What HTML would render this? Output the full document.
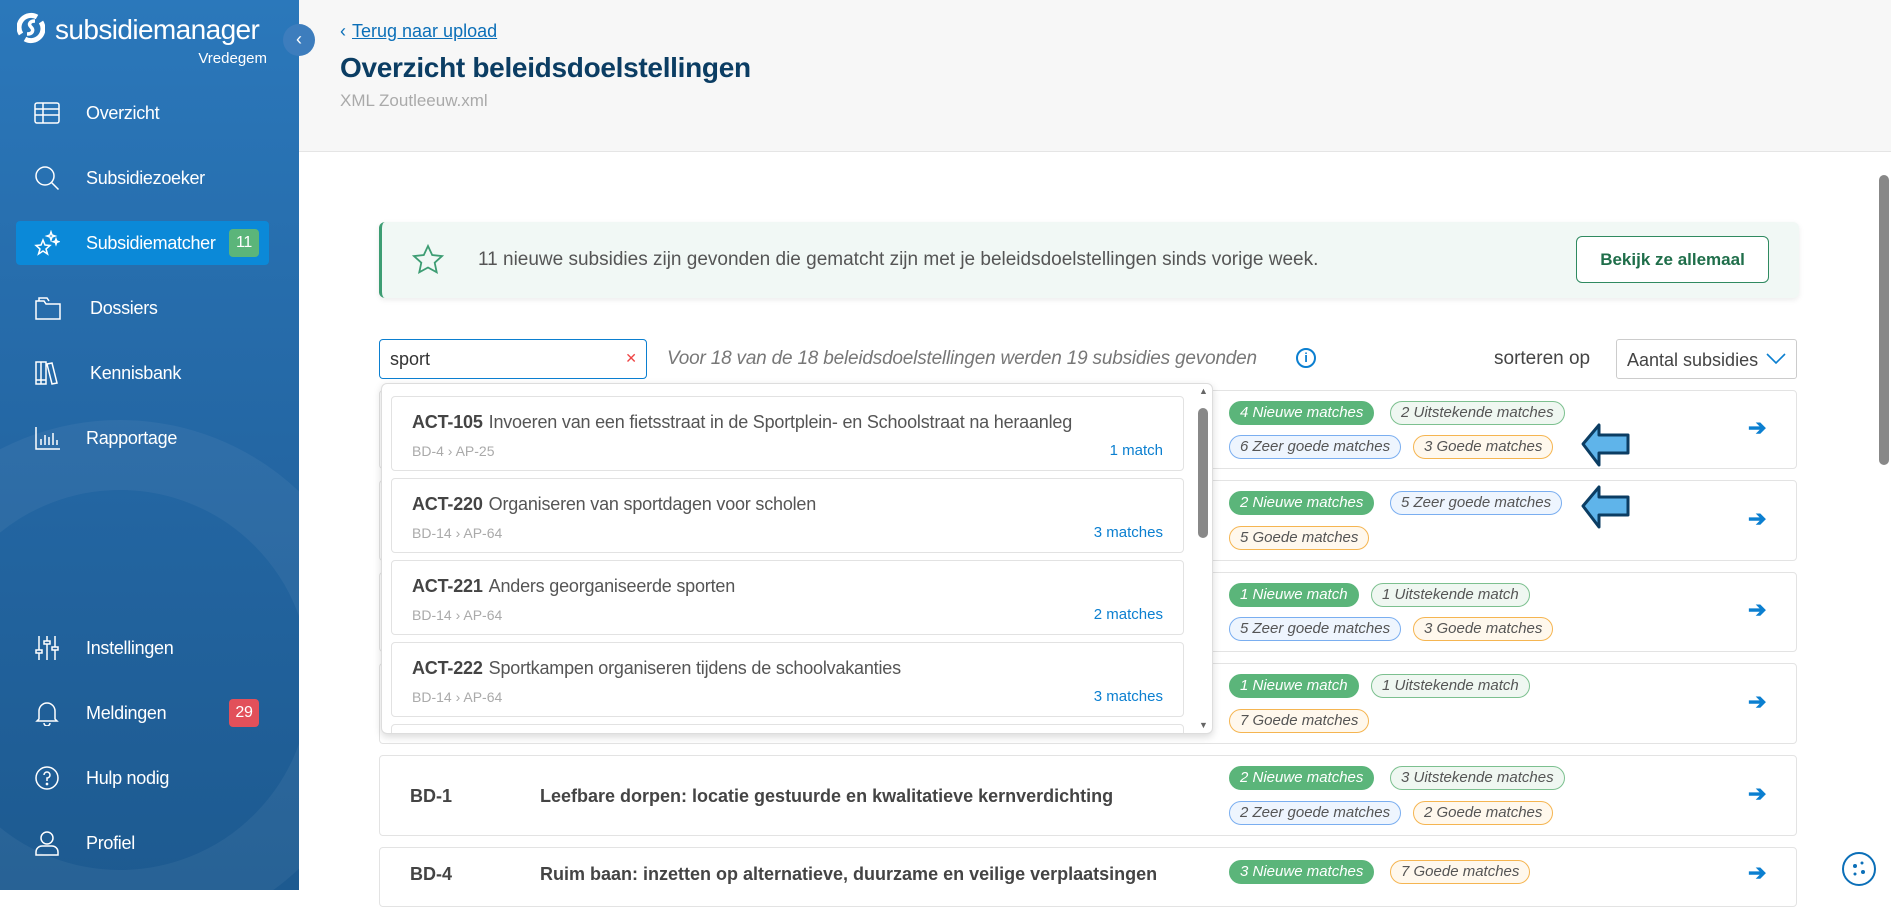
<!DOCTYPE html>
<html><head><meta charset="utf-8"><style>
*{box-sizing:border-box;margin:0;padding:0}
body{width:1891px;height:890px;overflow:hidden;font-family:"Liberation Sans",sans-serif;background:#fff;position:relative;color:#333}
.sb{position:absolute;left:0;top:0;width:299px;height:890px;background:linear-gradient(180deg,#2b78bb 0%,#2467a4 50%,#1d5a90 100%);overflow:hidden;color:#fff}
.sb .bg{position:absolute;left:-140px;top:420px;width:520px;height:520px;border-radius:50%;border:70px solid rgba(255,255,255,0.05)}
.logo{position:absolute;left:17px;top:12px;font-size:28px;letter-spacing:-0.6px}
.logo .ic{display:inline-block;width:28px;height:32px;vertical-align:-5px;margin-right:10px}
.ved{position:absolute;right:32px;top:50px;font-size:15px}
.nav{position:absolute;left:0;width:299px;height:44px;font-size:18px;letter-spacing:-0.3px}
.nav svg{position:absolute;left:34px;top:9px}
.nav span{position:absolute;left:86px;top:12px}
.act{left:16px;width:253px;background:#0b89d8;border-radius:4px}
.act svg{left:18px}.act span{left:70px}
.bdg{position:absolute;top:8px;width:30px;height:28px;border-radius:4px;font-size:16px;text-align:center;line-height:28px}
.tog{position:absolute;left:283px;top:24px;width:32px;height:32px;border-radius:50%;background:#3d7dbd;color:#fff;text-align:center;line-height:30px;font-size:18px}
.hdr{position:absolute;left:299px;top:0;width:1592px;height:152px;background:#f7f7f7;border-bottom:1px solid #e5e5e5}
.back{position:absolute;left:340px;top:21px;font-size:18px;color:#0b6fb8}
.back u{margin-left:6px}
h1{position:absolute;left:340px;top:52px;font-size:28px;color:#0b3d63;font-weight:bold;letter-spacing:-0.3px}
.sub{position:absolute;left:340px;top:91px;font-size:17px;color:#aaa}
.banner{position:absolute;left:379px;top:222px;width:1420px;height:76px;background:#f1f8f5;border-left:3px solid #3d9d73;border-radius:6px;box-shadow:0 2px 6px rgba(0,0,0,.08)}
.banner .t{position:absolute;left:96px;top:27px;font-size:19px;color:#555}
.banner .b{position:absolute;right:30px;top:14px;width:193px;height:47px;border:1px solid #2f8a60;border-radius:6px;color:#1f6e4a;font-weight:bold;font-size:17px;text-align:center;line-height:45px;background:#fff}
.inp{position:absolute;left:379px;top:339px;width:268px;height:40px;border:1px solid #0b7fd0;border-radius:4px;font-size:18px;padding:9px 10px}
.inp i{position:absolute;right:9px;top:10px;color:#e44;font-style:normal;font-size:14px}
.res{position:absolute;left:667px;top:348px;font-size:19px;color:#777;font-style:italic;letter-spacing:-0.2px}
.info{position:absolute;left:1296px;top:348px;width:20px;height:20px;border:2px solid #0b7fd0;border-radius:50%;color:#0b7fd0;font-size:13px;text-align:center;line-height:16px;font-weight:bold}
.sort{position:absolute;left:1494px;top:348px;font-size:19px;color:#444}
.sel{position:absolute;left:1616px;top:339px;width:181px;height:40px;border:1px solid #ccc;border-radius:3px;font-size:18px;padding:10px 10px;color:#444}
.sel svg{position:absolute;right:10px;top:13px}
.row{position:absolute;left:379px;width:1418px;background:#fff;border:1px solid #e3e3e3;border-radius:4px}
.row .id{position:absolute;left:30px;font-size:18px;font-weight:bold;color:#444}
.row .tt{position:absolute;left:160px;font-size:18px;font-weight:bold;color:#444}
.row .arr{position:absolute;left:1368px;color:#0b7fd0;font-size:22px;font-weight:bold}
.pl{position:absolute;height:24px;border-radius:12px;font-size:15px;font-style:italic;line-height:22px;padding:0 10px;white-space:nowrap;border:1px solid}
.g{background:#5bb57a;border-color:#5bb57a;color:#fff}
.u{background:#eff7f1;border-color:#7cc08f;color:#555}
.z{background:#eef5fe;border-color:#7aaef0;color:#555}
.o{background:#fff8ed;border-color:#f5b551;color:#555}
.dd{position:absolute;left:381px;top:383px;width:832px;height:351px;background:#fff;border:1px solid #ddd;border-radius:6px;box-shadow:0 3px 8px rgba(0,0,0,.15);overflow:hidden}
.it{position:absolute;left:9px;width:793px;height:75px;border:1px solid #e2e2e2;border-radius:4px;background:#fff}
.it .a{position:absolute;left:20px;top:15px;font-size:18px;color:#555;letter-spacing:-0.2px}
.it .a b{color:#444;margin-right:6px}
.it .p{position:absolute;left:20px;top:46px;font-size:14px;color:#aaa}
.it .m{position:absolute;right:20px;top:45px;font-size:15px;color:#0b7fd0}
.msb{position:absolute;left:1879px;top:175px;width:10px;height:290px;background:#888;border-radius:5px}
</style></head><body>
<div class="sb"><div class="bg"></div>
<div class="logo"><svg class="ic" viewBox="0 0 28 32"><path d="M20 5A12 12 0 0 0 4 22" fill="none" stroke="#fff" stroke-width="5"/><path d="M8 27A12 12 0 0 0 24 10" fill="none" stroke="#fff" stroke-width="5"/><path d="M18 9c-5 0-7 3-4 6s2 7-4 7" fill="none" stroke="#fff" stroke-width="3.5"/></svg>subsidiemanager</div>
<div class="ved">Vredegem</div>
<div class="nav" style="top:91px"><svg width="26" height="26" viewBox="0 0 26 26" fill="none" stroke="#fff" stroke-width="1.5"><rect x="1" y="3" width="24" height="20" rx="2"/><path d="M1 9h24M1 15h24M9 3v20"/></svg><span>Overzicht</span></div>
<div class="nav" style="top:156px"><svg width="26" height="26" viewBox="0 0 26 26" fill="none" stroke="#fff" stroke-width="1.5"><circle cx="11" cy="11" r="9"/><path d="M17.5 17.5l7 7"/></svg><span>Subsidiezoeker</span></div>
<div class="nav act" style="top:221px"><svg width="26" height="26" viewBox="0 0 26 26" fill="none" stroke="#fff" stroke-width="1.5"><path d="M9 10l2 5 5 .5-4 3.5 1.5 5-4.5-3-4.5 3 1.5-5-4-3.5 5-.5z"/><path d="M17 2l1 3 3 1-3 1-1 3-1-3-3-1 3-1zM22 9l.7 2 2 .7-2 .7-.7 2-.7-2-2-.7 2-.7z"/></svg><span>Subsidiematcher</span><div class="bdg" style="left:213px;background:#5bb57a">11</div></div>
<div class="nav" style="top:286px"><svg width="30" height="26" viewBox="0 0 30 26" fill="none" stroke="#fff" stroke-width="1.5"><path d="M2 6h8l2 3h14v15H2z"/><path d="M5 6V3h8l2 3"/></svg><span style="left:90px">Dossiers</span></div>
<div class="nav" style="top:351px"><svg width="30" height="26" viewBox="0 0 30 26" fill="none" stroke="#fff" stroke-width="1.5"><path d="M2 2h5v22H2zM7 2h5v22H7zM13 4l5-1 5 20-5 1z"/><path d="M2 20h10"/></svg><span style="left:90px">Kennisbank</span></div>
<div class="nav" style="top:416px"><svg width="28" height="26" viewBox="0 0 28 26" fill="none" stroke="#fff" stroke-width="1.5"><path d="M2 2v22h24M7 20v-6M11 20v-10M15 20v-8M19 20v-12M23 20v-5"/></svg><span>Rapportage</span></div>
<div class="nav" style="top:626px"><svg width="26" height="26" viewBox="0 0 26 26" fill="none" stroke="#fff" stroke-width="1.5"><path d="M5 1v24M13 1v24M21 1v24"/><rect x="2" y="15" width="6" height="3" fill="#245f98"/><rect x="10" y="6" width="6" height="3" fill="#245f98"/><rect x="18" y="12" width="6" height="3" fill="#245f98"/></svg><span>Instellingen</span></div>
<div class="nav" style="top:691px"><svg width="26" height="26" viewBox="0 0 26 26" fill="none" stroke="#fff" stroke-width="1.5"><path d="M5 19V11a8 8 0 0 1 16 0v8l2 2H3zM10 23a3 3 0 0 0 6 0"/></svg><span>Meldingen</span><div class="bdg" style="left:229px;background:#e2505a">29</div></div>
<div class="nav" style="top:756px"><svg width="26" height="26" viewBox="0 0 26 26" fill="none" stroke="#fff" stroke-width="1.5"><circle cx="13" cy="13" r="11"/><path d="M10 10a3 3 0 1 1 3 3v3"/><circle cx="13" cy="19" r=".6" fill="#fff"/></svg><span>Hulp nodig</span></div>
<div class="nav" style="top:821px"><svg width="26" height="26" viewBox="0 0 26 26" fill="none" stroke="#fff" stroke-width="1.5"><circle cx="13" cy="8" r="6"/><path d="M2 25v-3a6 6 0 0 1 6-6h10a6 6 0 0 1 6 6v3z"/></svg><span>Profiel</span></div>
</div>
<div class="hdr"></div>
<div class="tog">‹</div>
<div class="back">‹<u>Terug naar upload</u></div>
<h1>Overzicht beleidsdoelstellingen</h1>
<div class="sub">XML Zoutleeuw.xml</div>
<div class="msb"></div>
<div class="banner"><svg style="position:absolute;left:30px;top:22px" width="32" height="32" viewBox="0 0 32 32" fill="none" stroke="#3d9d73" stroke-width="1.8"><path d="M16 2l4.2 9 9.8 1.1-7.3 6.6 2 9.6L16 23.5l-8.7 4.8 2-9.6L2 12.1l9.8-1.1z"/></svg><div class="t">11 nieuwe subsidies zijn gevonden die gematcht zijn met je beleidsdoelstellingen sinds vorige week.</div><div class="b">Bekijk ze allemaal</div></div>
<div class="inp">sport<i>✕</i></div>
<div class="res">Voor 18 van de 18 beleidsdoelstellingen werden 19 subsidies gevonden</div>
<div class="info">i</div>
<div class="sort">sorteren op</div>
<div class="sel">Aantal subsidies<svg width="20" height="12" viewBox="0 0 20 12" fill="none" stroke="#0b7fd0" stroke-width="1.6"><path d="M1 1l9 9 9-9"/></svg></div>

<div class="row" style="top:390px;height:79px"><div class="pl g" style="left:849px;top:10px">4 Nieuwe matches</div><div class="pl u" style="left:1010px;top:10px">2 Uitstekende matches</div><div class="pl z" style="left:849px;top:44px">6 Zeer goede matches</div><div class="pl o" style="left:1033px;top:44px">3 Goede matches</div><div class="arr" style="top:24px">➔</div>
<svg style="position:absolute;left:1201px;top:31px" width="50" height="46" viewBox="0 0 50 46"><path d="M2 22L18 3v10h29v18H18v12z" fill="#5fb4ea" stroke="#0b3d63" stroke-width="3" stroke-linejoin="round"/></svg></div>
<div class="row" style="top:480px;height:81px"><div class="pl g" style="left:849px;top:10px">2 Nieuwe matches</div><div class="pl z" style="left:1010px;top:10px">5 Zeer goede matches</div><div class="pl o" style="left:849px;top:45px">5 Goede matches</div><div class="arr" style="top:25px">➔</div>
<svg style="position:absolute;left:1201px;top:3px" width="50" height="46" viewBox="0 0 50 46"><path d="M2 22L18 3v10h29v18H18v12z" fill="#5fb4ea" stroke="#0b3d63" stroke-width="3" stroke-linejoin="round"/></svg></div>
<div class="row" style="top:572px;height:80px"><div class="pl g" style="left:849px;top:10px">1 Nieuwe match</div><div class="pl u" style="left:991px;top:10px">1 Uitstekende match</div><div class="pl z" style="left:849px;top:44px">5 Zeer goede matches</div><div class="pl o" style="left:1033px;top:44px">3 Goede matches</div><div class="arr" style="top:24px">➔</div></div>
<div class="row" style="top:663px;height:81px"><div class="pl g" style="left:849px;top:10px">1 Nieuwe match</div><div class="pl u" style="left:991px;top:10px">1 Uitstekende match</div><div class="pl o" style="left:849px;top:45px">7 Goede matches</div><div class="arr" style="top:25px">➔</div></div>
<div class="row" style="top:755px;height:81px"><div class="id" style="top:30px">BD-1</div><div class="tt" style="top:30px">Leefbare dorpen: locatie gestuurde en kwalitatieve kernverdichting</div><div class="pl g" style="left:849px;top:10px">2 Nieuwe matches</div><div class="pl u" style="left:1010px;top:10px">3 Uitstekende matches</div><div class="pl z" style="left:849px;top:45px">2 Zeer goede matches</div><div class="pl o" style="left:1033px;top:45px">2 Goede matches</div><div class="arr" style="top:25px">➔</div></div>
<div class="row" style="top:847px;height:60px"><div class="id" style="top:16px">BD-4</div><div class="tt" style="top:16px">Ruim baan: inzetten op alternatieve, duurzame en veilige verplaatsingen</div><div class="pl g" style="left:849px;top:12px">3 Nieuwe matches</div><div class="pl o" style="left:1010px;top:12px">7 Goede matches</div><div class="arr" style="top:12px">➔</div></div>

<div class="dd">
<div class="it" style="top:12px"><div class="a"><b>ACT-105</b>Invoeren van een fietsstraat in de Sportplein- en Schoolstraat na heraanleg</div><div class="p">BD-4 › AP-25</div><div class="m">1 match</div></div>
<div class="it" style="top:94px"><div class="a"><b>ACT-220</b>Organiseren van sportdagen voor scholen</div><div class="p">BD-14 › AP-64</div><div class="m">3 matches</div></div>
<div class="it" style="top:176px"><div class="a"><b>ACT-221</b>Anders georganiseerde sporten</div><div class="p">BD-14 › AP-64</div><div class="m">2 matches</div></div>
<div class="it" style="top:258px"><div class="a"><b>ACT-222</b>Sportkampen organiseren tijdens de schoolvakanties</div><div class="p">BD-14 › AP-64</div><div class="m">3 matches</div></div>
<div class="it" style="top:340px"></div>
<div style="position:absolute;left:817px;top:2px;font-size:9px;color:#666">▲</div>
<div style="position:absolute;left:817px;top:336px;font-size:9px;color:#666">▼</div>
<div style="position:absolute;left:816px;top:24px;width:10px;height:130px;background:#888;border-radius:5px"></div>
</div>
<div style="position:absolute;left:1842px;top:852px;width:34px;height:34px;border-radius:50%;border:2px solid #0b6fb8;background:#fff"><svg width="30" height="30" viewBox="0 0 30 30"><circle cx="11" cy="12" r="2" fill="#0b6fb8"/><circle cx="18" cy="9" r="1.5" fill="#0b6fb8"/><circle cx="19" cy="18" r="2" fill="#0b6fb8"/><circle cx="11" cy="20" r="1.5" fill="#0b6fb8"/></svg></div>
</body></html>
